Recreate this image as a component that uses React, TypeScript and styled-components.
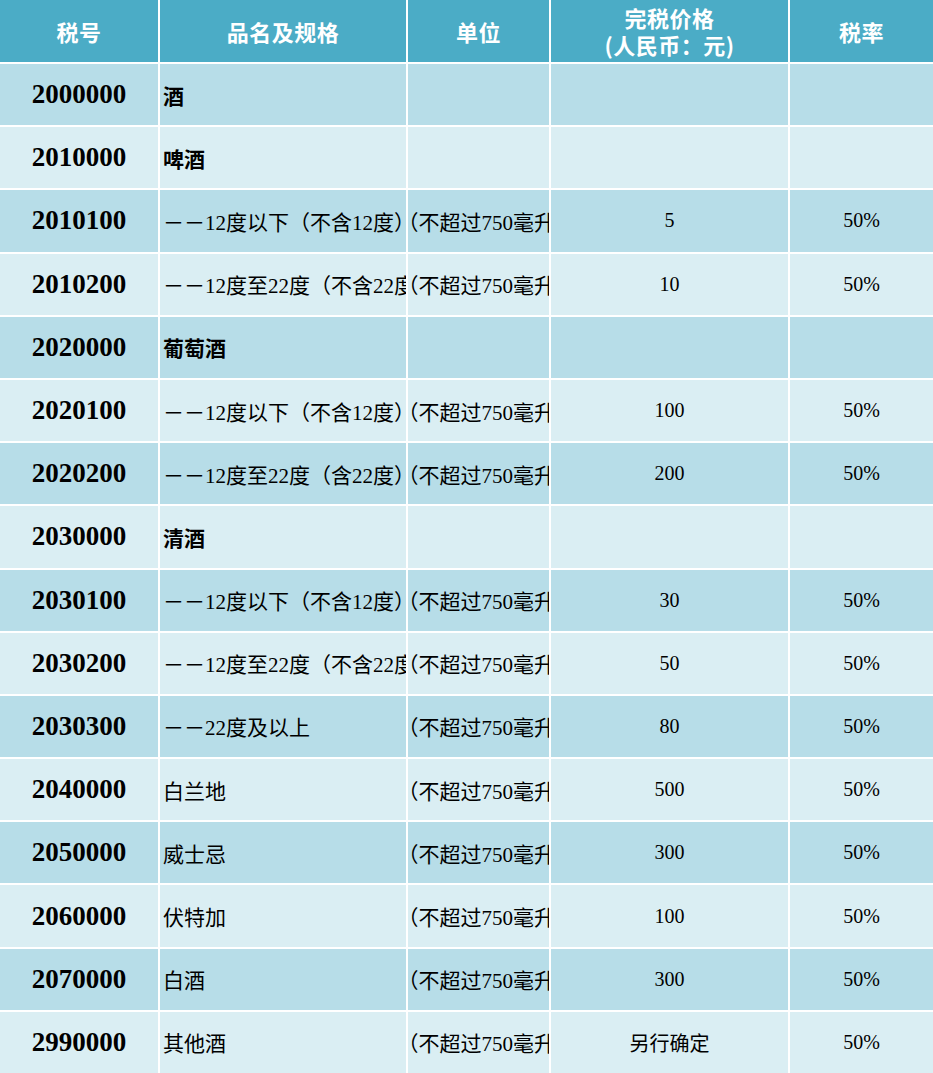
import * as React from 'react';
import styled, { createGlobalStyle } from 'styled-components';

const colors = {
  header: '#4bacc6',
  dark: '#b7dde8',
  light: '#daeef3',
  rule: '#ffffff',
  text: '#000000',
};

type Tone = 'dark' | 'light';
type Align = 'left' | 'center';

interface Item {
  code: string;
  name: string;
  unit?: string;
  price?: string;
  rate?: string;
  group?: boolean;
}

// Excel-style cells: long text is clipped by the neighbouring column
const UNIT = '（不超过750毫升/瓶）';

const items: Item[] = [
  { code: '2000000', name: '酒', group: true },
  { code: '2010000', name: '啤酒', group: true },
  { code: '2010100', name: '－－12度以下（不含12度）', unit: UNIT, price: '5', rate: '50%' },
  { code: '2010200', name: '－－12度至22度（不含22度）', unit: UNIT, price: '10', rate: '50%' },
  { code: '2020000', name: '葡萄酒', group: true },
  { code: '2020100', name: '－－12度以下（不含12度）', unit: UNIT, price: '100', rate: '50%' },
  { code: '2020200', name: '－－12度至22度（含22度）', unit: UNIT, price: '200', rate: '50%' },
  { code: '2030000', name: '清酒', group: true },
  { code: '2030100', name: '－－12度以下（不含12度）', unit: UNIT, price: '30', rate: '50%' },
  { code: '2030200', name: '－－12度至22度（不含22度）', unit: UNIT, price: '50', rate: '50%' },
  { code: '2030300', name: '－－22度及以上', unit: UNIT, price: '80', rate: '50%' },
  { code: '2040000', name: '白兰地', unit: UNIT, price: '500', rate: '50%' },
  { code: '2050000', name: '威士忌', unit: UNIT, price: '300', rate: '50%' },
  { code: '2060000', name: '伏特加', unit: UNIT, price: '100', rate: '50%' },
  { code: '2070000', name: '白酒', unit: UNIT, price: '300', rate: '50%' },
  { code: '2990000', name: '其他酒', unit: UNIT, price: '另行确定', rate: '50%' },
];

const GlobalStyle = createGlobalStyle`
  html, body {
    margin: 0;
    padding: 0;
    background: #ffffff;
  }
`;

const Sheet = styled.div`
  display: grid;
  grid-template-columns: 158px 246px 141px 237px 1fr;
  grid-template-rows: 62px;
  grid-auto-rows: 1fr;
  gap: 2px;
  width: 933px;
  height: 1073px;
  background: ${colors.rule};
  font-family: 'Liberation Serif', 'Noto Sans CJK SC', serif;
  color: ${colors.text};
`;

const HeaderCell = styled.div`
  display: flex;
  flex-direction: column;
  align-items: center;
  justify-content: center;
  background: ${colors.header};
  color: #ffffff;
  font-family: 'Noto Sans CJK SC', 'Noto Sans', sans-serif;
  font-weight: 700;
  font-size: 22px;
  line-height: 27px;
  letter-spacing: 0.5px;
  text-align: center;
`;

const Cell = styled.div<{ $tone: Tone; $align?: Align; $bold?: boolean }>`
  display: flex;
  align-items: center;
  justify-content: ${p => (p.$align === 'left' ? 'flex-start' : 'center')};
  padding-left: ${p => (p.$align === 'left' ? '3px' : '0')};
  background: ${p => (p.$tone === 'dark' ? colors.dark : colors.light)};
  font-size: ${p => (p.$align === 'left' ? '21px' : '20px')};
  font-weight: ${p => (p.$bold ? 700 : 400)};
  white-space: nowrap;
  overflow: hidden;
`;

const CodeCell = styled(Cell)`
  font-size: 27px;
  font-weight: 700;
`;

const UnitCell = styled(Cell)`
  padding-left: 0;
  text-indent: -0.5em;
`;

const App: React.FC = () => (
  <>
    <GlobalStyle />
    <Sheet>
      <HeaderCell>税号</HeaderCell>
      <HeaderCell>品名及规格</HeaderCell>
      <HeaderCell>单位</HeaderCell>
      <HeaderCell>
        <span>完税价格</span>
        <span>(人民币：元)</span>
      </HeaderCell>
      <HeaderCell>税率</HeaderCell>
      {items.map((item, i) => {
        const tone: Tone = i % 2 === 0 ? 'dark' : 'light';
        return (
          <React.Fragment key={item.code}>
            <CodeCell $tone={tone}>{item.code}</CodeCell>
            <Cell $tone={tone} $align="left" $bold={item.group}>
              {item.name}
            </Cell>
            <UnitCell $tone={tone} $align="left">
              {item.unit}
            </UnitCell>
            <Cell $tone={tone}>{item.price}</Cell>
            <Cell $tone={tone}>{item.rate}</Cell>
          </React.Fragment>
        );
      })}
    </Sheet>
  </>
);

export default App;
